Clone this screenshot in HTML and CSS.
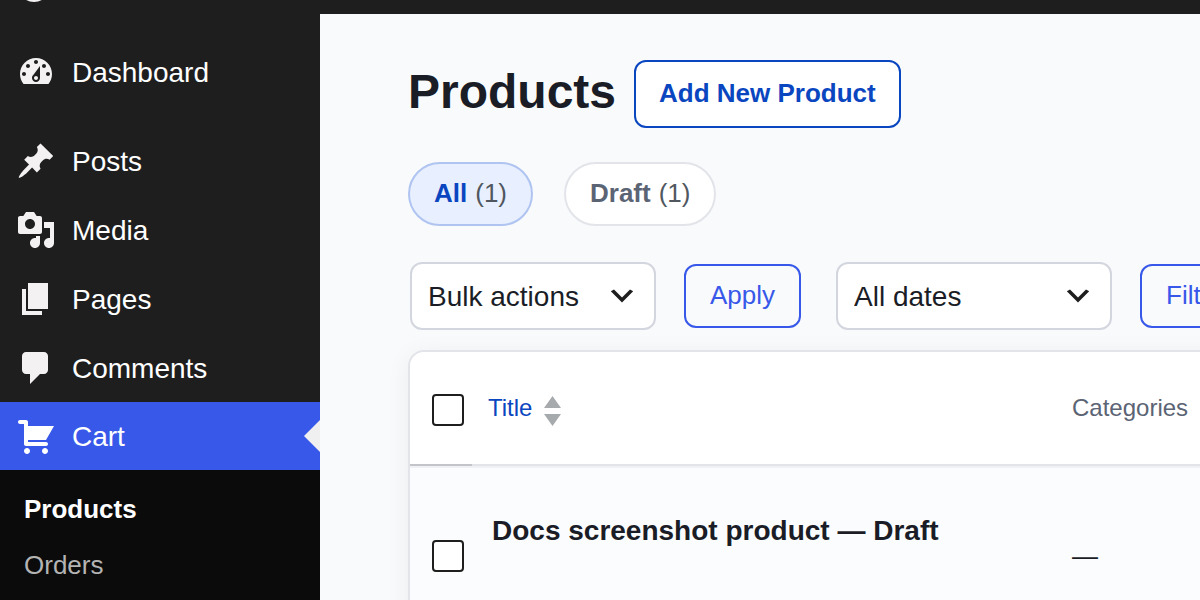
FILE: index.html
```html
<!DOCTYPE html>
<html lang="en">
<head>
    <meta charset="UTF-8">
    <meta name="viewport" content="width=device-width, initial-scale=1.0">
    <title>Products</title>
    <link rel="stylesheet" href="styles.css">
</head>
<body>
    <header class="topbar">
        <svg class="logo" viewBox="0 0 40 14"><circle cx="18" cy="-14" r="16" /></svg>
    </header>

    <div class="layout">
        <nav class="sidebar">
            <ul class="menu">
                <li><a class="menu-item" href="#">
                    <svg viewBox="0 0 20 20"><path d="M3.76 16h12.48c1.1-1.37 1.76-3.11 1.76-5 0-4.42-3.58-8-8-8s-8 3.58-8 8c0 1.89.66 3.63 1.76 5zM10 4c.55 0 1 .45 1 1s-.45 1-1 1-1-.45-1-1 .45-1 1-1zM6 6c.55 0 1 .45 1 1s-.45 1-1 1-1-.45-1-1 .45-1 1-1zm8 0c.55 0 1 .45 1 1s-.45 1-1 1-1-.45-1-1 .45-1 1-1zm-5.37 5.55L12 7v6c0 1.1-.9 2-2 2s-2-.9-2-2c0-.57.24-1.08.63-1.45zM4 10c.55 0 1 .45 1 1s-.45 1-1 1-1-.45-1-1 .45-1 1-1zm12 0c.55 0 1 .45 1 1s-.45 1-1 1-1-.45-1-1 .45-1 1-1zm-5 3c0-.55-.45-1-1-1s-1 .45-1 1 .45 1 1 1 1-.45 1-1z" /></svg>
                    <span>Dashboard</span>
                </a></li>
            </ul>
            <ul class="menu">
                <li><a class="menu-item" href="#">
                    <svg viewBox="0 0 20 20"><path d="M10.44 3.02l1.82-1.82 6.36 6.35-1.83 1.82c-1.05-.68-2.48-.57-3.41.36l-.75.75c-.92.93-1.04 2.35-.35 3.41l-1.83 1.82-2.41-2.41-2.8 2.79c-.42.42-3.38 2.71-3.8 2.29s1.86-3.39 2.28-3.81l2.79-2.79L4.1 9.36l1.83-1.82c1.05.69 2.48.57 3.4-.36l.75-.75c.93-.92 1.05-2.35.36-3.41z" /></svg>
                    <span>Posts</span>
                </a></li>
                <li><a class="menu-item" href="#">
                    <svg viewBox="0 0 20 20"><path d="M13 11V4c0-.55-.45-1-1-1h-1.67L9 1H5L3.67 3H2c-.55 0-1 .45-1 1v7c0 .55.45 1 1 1h10c.55 0 1-.45 1-1zM7 4.5c1.38 0 2.5 1.12 2.5 2.5S8.38 9.5 7 9.5 4.5 8.38 4.5 7 5.62 4.5 7 4.5zM14 6h5v10.5c0 1.38-1.12 2.5-2.5 2.5S14 17.88 14 16.5s1.12-2.5 2.5-2.5c.17 0 .34.02.5.05V9h-3V6zm-4 8.05V13h2v3.5c0 1.38-1.12 2.5-2.5 2.5S7 17.88 7 16.5 8.12 14 9.5 14c.17 0 .34.02.5.05z" /></svg>
                    <span>Media</span>
                </a></li>
                <li><a class="menu-item" href="#">
                    <svg viewBox="0 0 20 20"><path d="M6 15V2h10v13H6zm-1 1h8v2H3V5h2v11z" /></svg>
                    <span>Pages</span>
                </a></li>
                <li><a class="menu-item" href="#">
                    <svg viewBox="0 0 20 20"><path d="M5 2h9c1.1 0 2 .9 2 2v7c0 1.1-.9 2-2 2h-2l-5 5v-5H5c-1.1 0-2-.9-2-2V4c0-1.1.9-2 2-2z" /></svg>
                    <span>Comments</span>
                </a></li>
            </ul>
            <a class="menu-item current" href="#">
                <svg viewBox="0 0 20 20"><path d="M6 13h9c.55 0 1 .45 1 1s-.45 1-1 1H5c-.55 0-1-.45-1-1V4H2c-.55 0-1-.45-1-1s.45-1 1-1h3c.55 0 1 .45 1 1v2h13l-4 7H6v1zm-.5 3c.83 0 1.5.67 1.5 1.5S6.33 19 5.5 19 4 18.33 4 17.5 4.67 16 5.5 16zm9 0c.83 0 1.5.67 1.5 1.5s-.67 1.5-1.5 1.5-1.5-.67-1.5-1.5.67-1.5 1.5-1.5z" /></svg>
                <span>Cart</span>
            </a>
            <ul class="submenu">
                <li><a class="active" href="#">Products</a></li>
                <li><a href="#">Orders</a></li>
            </ul>
        </nav>

        <main class="content">
            <div class="page-title">
                <h1>Products</h1>
                <a class="add-new" href="#">Add New Product</a>
            </div>

            <div class="filters">
                <a class="pill selected" href="#"><b>All</b> <span>(1)</span></a>
                <a class="pill" href="#"><b>Draft</b> <span>(1)</span></a>
            </div>

            <div class="toolbar">
                <div class="group">
                    <select class="bulk" aria-label="Bulk actions">
                        <option>Bulk actions</option>
                    </select>
                    <button type="button">Apply</button>
                </div>
                <div class="group">
                    <select class="dates" aria-label="Filter by date">
                        <option>All dates</option>
                    </select>
                    <button type="button">Filter</button>
                </div>
            </div>

            <div class="table-card">
                <table>
                    <thead>
                        <tr>
                            <th class="check"><input type="checkbox" aria-label="Select all"></th>
                            <th class="title">
                                <a href="#">Title
                                    <svg class="sort" viewBox="0 0 17 30"><path d="M8.500 0L17 12H0zM0 18h17L8.500 30z" /></svg>
                                </a>
                            </th>
                            <th>Categories</th>
                        </tr>
                    </thead>
                    <tbody>
                        <tr>
                            <td class="check"><input type="checkbox" aria-label="Select Docs screenshot product"></td>
                            <td class="title"><a href="#">Docs screenshot product</a> — Draft</td>
                            <td>—</td>
                        </tr>
                    </tbody>
                </table>
            </div>
        </main>
    </div>
</body>
</html>
```
FILE: styles.css
```css
* {
    box-sizing: border-box;
}

body {
    margin: 0;
    height: 100vh;
    overflow: hidden;
    display: flex;
    flex-direction: column;
    font-family: "Liberation Sans", Arial, sans-serif;
    font-size: 26px;
    color: #1a1d26;
    background-color: #f9fafc;
}

a {
    text-decoration: none;
}

ul {
    list-style: none;
    margin: 0;
    padding: 0;
}

.topbar {
    height: 14px;
    flex-shrink: 0;
    padding-left: 16px;
    background-color: #1e1e1e;
}

.logo {
    display: block;
    width: 40px;
    height: 14px;
    fill: #f3f1f1;
}

.layout {
    flex: 1;
    min-height: 0;
    display: flex;
}

/* Sidebar */
.sidebar {
    width: 320px;
    flex-shrink: 0;
    display: flex;
    flex-direction: column;
    padding-top: 24px;
    background-color: #1e1e1e;
}

.menu {
    display: flex;
    flex-direction: column;
    gap: 1px;
}

.menu + .menu {
    margin-top: 21px;
}

.menu-item {
    display: flex;
    align-items: center;
    flex-shrink: 0;
    gap: 16px;
    height: 68px;
    padding: 0 16px;
    font-size: 28px;
    color: #fff;
}

.menu-item span {
    padding-top: 2px;
}

.menu-item svg {
    width: 40px;
    height: 40px;
    fill: #f3f1f1;
}

.menu-item.current {
    position: relative;
    background-color: #3858e9;
}

.menu-item.current svg {
    fill: #fff;
}

.menu-item.current::after {
    content: "";
    position: absolute;
    top: 18px;
    right: 0;
    border: 16px solid transparent;
    border-left-width: 0;
    border-right-color: #f0f0f1;
}

.submenu {
    flex: 1;
    padding-top: 11px;
    background-color: #0b0b0b;
}

.submenu a {
    display: block;
    padding: 0 24px;
    line-height: 56px;
    color: #b4b4b4;
}

.submenu .active {
    font-weight: bold;
    color: #fff;
}

/* Content */
.content {
    flex: 1;
    min-width: 0;
    overflow: hidden;
    padding: 46px 40px 40px 88px;
}

.page-title {
    display: flex;
    align-items: center;
    gap: 18px;
}

h1 {
    margin: 0;
    padding-bottom: 4px;
    font-size: 48px;
    line-height: 60px;
}

.add-new {
    padding: 0 23px 2px;
    border: 2px solid #0a46c0;
    border-radius: 12px;
    font-weight: bold;
    line-height: 62px;
    color: #0a46c0;
    background-color: #fff;
}

.filters {
    display: flex;
    gap: 31px;
    margin-top: 34px;
}

.pill {
    display: flex;
    gap: 8px;
    padding: 0 24px 2px;
    border: 2px solid #e2e4e9;
    border-radius: 32px;
    line-height: 58px;
    color: #5b6474;
    background-color: #fff;
}

.pill span {
    color: #50575e;
}

.pill.selected {
    border-color: #afc4f0;
    color: #0a46c0;
    background-color: #e8effe;
}

.toolbar {
    display: flex;
    gap: 35px;
    margin-top: 36px;
    padding-left: 2px;
}

.group {
    display: flex;
    align-items: center;
    flex-shrink: 0;
    gap: 28px;
}

select {
    appearance: none;
    height: 68px;
    padding: 0 48px 0 16px;
    border: 2px solid #d3d6de;
    border-radius: 12px;
    font-family: inherit;
    font-size: 28px;
    color: #1a1d26;
    background: #fff url("data:image/svg+xml,%3Csvg xmlns='http://www.w3.org/2000/svg' viewBox='0 0 20 20'%3E%3Cpath d='M5 6l5 5 5-5 2 1-7 7-7-7 2-1z' fill='%231e1e1e'/%3E%3C/svg%3E") no-repeat right 16px center / 32px 32px;
}

.bulk {
    width: 246px;
}

.dates {
    width: 276px;
}

button {
    height: 64px;
    padding: 0 24px 2px;
    border: 2px solid #3858e9;
    border-radius: 12px;
    font-family: inherit;
    font-size: 26px;
    color: #3858e9;
    background-color: transparent;
    cursor: pointer;
}

/* Product table */
.table-card {
    min-width: 1200px;
    margin-top: 20px;
    overflow: hidden;
    border: 2px solid #e2e4e9;
    border-radius: 16px;
    background-color: #fff;
    box-shadow: 0 4px 24px rgba(16, 24, 40, 0.06);
}

table {
    width: 100%;
    table-layout: fixed;
    border-spacing: 0;
}

th,
td {
    padding: 0 16px;
    text-align: left;
}

th {
    height: 114px;
    border-bottom: 2px solid #e2e4e9;
    font-size: 24px;
    font-weight: normal;
    color: #5b6474;
}

th a {
    display: flex;
    align-items: center;
    gap: 12px;
    color: #0a46c0;
}

td {
    height: 178px;
    border-top: 2px solid #eff1f6;
    background-color: #fbfcfe;
}

.check {
    width: 62px;
    padding: 0 0 0 22px;
}

th.check {
    padding-top: 4px;
    border-bottom-color: #c3c4c7;
}

.title {
    width: 584px;
}

td.title {
    padding: 47px 20px;
    vertical-align: top;
    font-size: 28px;
    font-weight: bold;
}

td a {
    color: inherit;
}

.sort {
    width: 17px;
    height: 33px;
    padding-top: 3px;
    margin-top: 3px;
    fill: #a7aaad;
}

input[type="checkbox"] {
    appearance: none;
    display: block;
    width: 32px;
    height: 32px;
    margin: 0;
    border: 2px solid #1e1e1e;
    border-radius: 4px;
    background-color: #fff;
}
```
